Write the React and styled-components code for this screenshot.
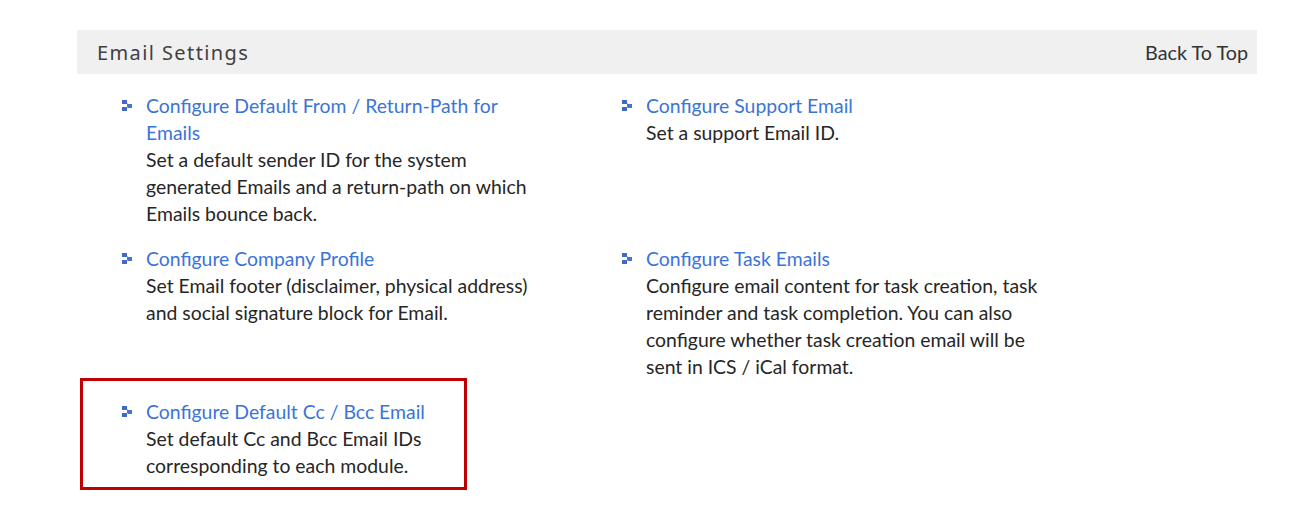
import React from 'react'
import styled, { createGlobalStyle } from 'styled-components'

const GlobalStyle = createGlobalStyle`
  body {
    margin: 0;
    background: #ffffff;
    font-family: Lato, "Open Sans", sans-serif;
  }
`;

const Page = styled.div`
  padding: 30px 33px 40px 77px;
`;

const Header = styled.div`
  height: 44px;
  background: #f0f0f0;
  display: flex;
  align-items: center;
  justify-content: space-between;
  padding: 0 9px 0 20px;
`;

const HeaderTitle = styled.div`
  font-family: "Noto Sans", sans-serif;
  font-size: 20px;
  color: #404040;
  letter-spacing: 1.4px;
`;

const BackLink = styled.a`
  font-size: 19.8px;
  color: #333;
  text-decoration: none;
  cursor: pointer;
`;

const Grid = styled.div`
  display: grid;
  grid-template-columns: 500px 500px;
  row-gap: 18px;
  padding: 18px 0 0 45px;
`;

const Item = styled.div`
  position: relative;
  display: flex;
  gap: 14px;
  width: 428px;
  ${p => p.highlighted && `
    &::after {
      content: '';
      position: absolute;
      top: -20px;
      left: -42px;
      width: 381px;
      height: 106px;
      border: 3px solid #c00000;
    }
  `}
`;

const BulletBox = styled.div`
  flex: 0 0 9px;
  height: 27px;
  display: flex;
  align-items: center;
`;

const Body = styled.div`
  font-size: 19.4px;
  line-height: 27px;
  color: #262626;
  width: 400px;
`;

const Link = styled.a`
  display: block;
  color: #3b74d7;
  text-decoration: none;
  cursor: pointer;
`;

const Bullet = () => (
  <svg width="10" height="11" viewBox="0 0 10 11">
    <rect x="0" y="0" width="5" height="4" fill="#4169c8" />
    <rect x="5" y="4" width="5" height="4" fill="#4a73d0" />
    <rect x="0" y="7" width="5" height="4" fill="#4169c8" />
    <rect x="5" y="3" width="1" height="1" fill="#a9bde6" />
    <rect x="5" y="7" width="1" height="1" fill="#a9bde6" />
  </svg>
);

const items = [
  {
    title: 'Configure Default From / Return-Path for Emails',
    text: 'Set a default sender ID for the system generated Emails and a return-path on which Emails bounce back.',
  },
  { title: 'Configure Support Email', text: 'Set a support Email ID.' },
  {
    title: 'Configure Company Profile',
    text: 'Set Email footer (disclaimer, physical address) and social signature block for Email.',
  },
  {
    title: 'Configure Task Emails',
    text: 'Configure email content for task creation, task reminder and task completion. You can also configure whether task creation email will be sent in ICS / iCal format.',
  },
  {
    title: 'Configure Default Cc / Bcc Email',
    text: 'Set default Cc and Bcc Email IDs corresponding to each module.',
    highlighted: true,
  },
];

export default function App() {
  return (
    <>
      <GlobalStyle />
      <Page>
        <Header>
          <HeaderTitle>Email Settings</HeaderTitle>
          <BackLink>Back To Top</BackLink>
        </Header>
        <Grid>
          {items.map(item => (
            <Item key={item.title} highlighted={item.highlighted}>
              <BulletBox><Bullet /></BulletBox>
              <Body>
                <Link>{item.title}</Link>
                {item.text}
              </Body>
            </Item>
          ))}
        </Grid>
      </Page>
    </>
  );
}
